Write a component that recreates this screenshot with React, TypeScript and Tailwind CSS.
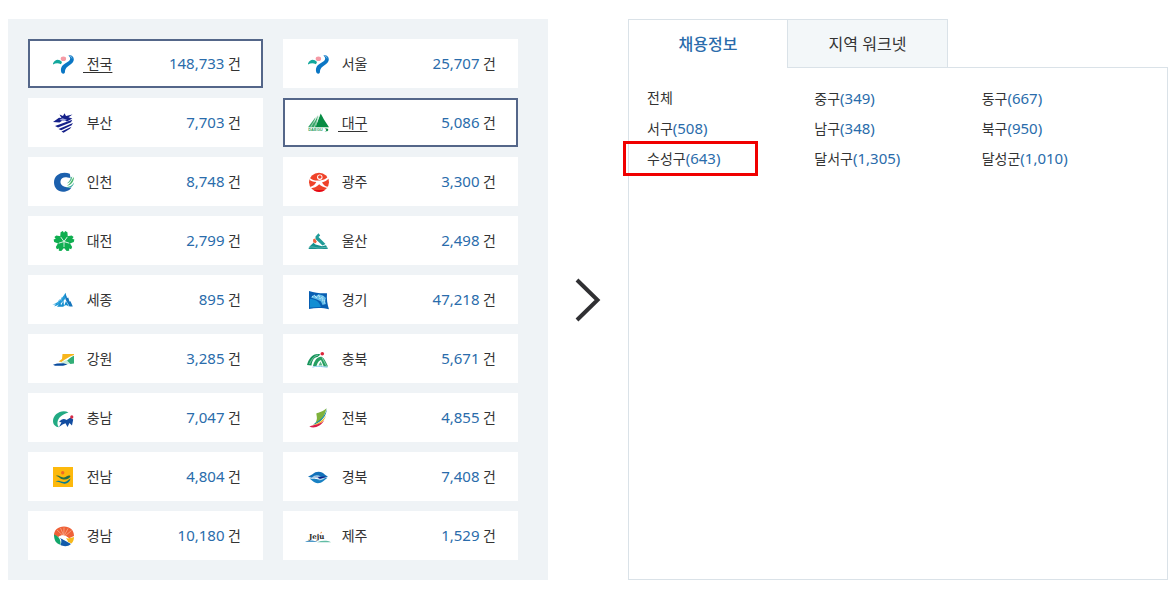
import type { ReactNode } from "react";

type Region = { name: string; count: string; selected?: boolean; icon: ReactNode };

const seoul = (
  <>
    <path d="M3 12.500C5 8.500 8.500 7.500 12 11L11 13.200C8 11.600 5.500 12 3 13.500Z" fill="#12a79c" />
    <ellipse cx="13.400" cy="7.700" rx="2.700" ry="2.300" fill="#f59aa5" />
    <path d="M18.500 4.500C21 3.500 24 5.500 23.800 8.500C23.500 12 20.500 13.500 17.800 15.500C15.500 17.300 14.900 19 14.900 21.500C14 23.300 11.800 23 11.200 21C10.200 16.500 12.500 14 15.500 12.300C18.500 10.500 20.300 9.500 20.200 7.500C20 6 19.200 5.500 18.500 4.500Z" fill="#0a76c4" />
    <path d="M18.500 4.500C20.500 4 22.500 5.500 22.400 8C21.500 6.500 20 5.500 18.500 4.500Z" fill="#7db9e2" />
  </>
);

const busan = (
  <>
    <path d="M3 12L9 7.800L11.500 8L9.500 4.500L13 6L14.500 3.300L16 6L22.500 4.500L18.500 7.300L22.300 8.500L17 11.500L13.500 9.800L9.500 12.500Z" fill="#15208a" />
    <path d="M9.500 9.800L12.500 8.300L17 9.700L13.500 11.300Z" fill="#9fa6dc" />
    <path d="M5 16L22.300 9.800L21 12.300L8 17.600Z" fill="#15208a" />
    <path d="M8.500 18.900L23 13L21.600 15.300L11.200 20.200Z" fill="#15208a" />
    <path d="M11.500 21.400L21.500 16.700L20 18.700L13.500 22.800Z" fill="#15208a" />
  </>
);

const daegu = (
  <>
    <path d="M10.500 17.300L15.700 3.600L17.500 6.800L18.800 9.200L24 17.300Z" fill="#078c44" />
    <path d="M3 17.300L10.500 7.200L7.800 17.300ZM6.800 17.300L13 5.200L11 17.300Z" fill="#36a568" />
    <path d="M5.800 17L12 6.400M9.300 17L14.300 5.300" stroke="#c5e5d2" strokeWidth=".7" />
    <path d="M19.500 18.700C22 18 23.500 18.800 23.300 20C23 21.300 21 21.500 19.500 21.400C21.500 20.900 22.300 19.500 19.500 18.700Z" fill="#078c44" />
    <text x="3.200" y="21.400" fontSize="4" fontWeight="700" fill="#2d9e62" className="font-['Liberation_Sans',sans-serif]">DAEGU</text>
  </>
);

const incheon = (
  <>
    <path d="M19.800 4.800C13 1.800 4 5 4 13.300C4 20 9.500 24 15.500 22.500C18.500 21.700 20.500 20.500 21.500 18.500C19.500 18.800 17.500 18.600 16 18C12.300 17.500 10.300 15.500 10.500 12.300C10.800 8.800 14.500 7.500 17.500 8.500L20.500 9Z" fill="#1c60ad" />
    <path d="M24 8C21.500 10.500 21.500 14 16.800 16.700C20.500 16.700 23.800 13 24 8Z" fill="#45b66a" />
    <path d="M24 13.500C22.500 16.500 19.500 18 16 18.200C19.500 19.800 23.500 17.500 24 13.500Z" fill="#2fa899" />
    <path d="M20.800 8.500C20.300 11 18.800 13 16.800 14.500C19.800 13.800 22 11.500 22.300 7.500Z" fill="#54b98e" />
  </>
);

const petal = "M14 13.200L10.200 8.600L10.600 4.300L12.800 3L14 4.800L15.200 3L17.400 4.300L17.800 8.600Z";
const daejeon = (
  <>
    <g fill="#0fae50">
      <path d={petal} />
      <path d={petal} transform="rotate(72 14 13.500)" />
      <path d={petal} transform="rotate(144 14 13.500)" />
      <path d={petal} transform="rotate(216 14 13.500)" />
      <path d={petal} transform="rotate(288 14 13.500)" />
    </g>
    <g stroke="#d4f1df" strokeWidth=".9">
      <path d="M14 13.500V8" transform="rotate(36 14 13.500)" />
      <path d="M14 13.500V8" transform="rotate(108 14 13.500)" />
      <path d="M14 13.500V8" transform="rotate(180 14 13.500)" />
      <path d="M14 13.500V8" transform="rotate(252 14 13.500)" />
      <path d="M14 13.500V8" transform="rotate(324 14 13.500)" />
    </g>
  </>
);

const sejong = (
  <>
    <path d="M2.300 17.500C7 16.500 12 12 15.500 5.700L16.500 10C13 15 9 18.700 4 19.300L6 17.500Z" fill="#239bd8" />
    <path d="M15.200 6L17 11L18.200 10.500L19.500 14.500L20.500 14.300L22.800 19.500H19.500L15.500 12.500Z" fill="#1676bd" />
    <path d="M7 19.700L10.500 15.500L11 18.500L13.500 13.500L14 19L16 14L19 19.500L16 18L13 19.700Z" fill="#168fcf" />
    <path d="M7.500 16.500L9.500 12.500M11 14L12.200 10" stroke="#58b8e5" strokeWidth=".9" />
  </>
);

const gwangju = (
  <>
    <ellipse cx="14" cy="13.200" rx="10" ry="9.500" fill="#ef4329" />
    <circle cx="14.800" cy="8.300" r="2.700" fill="#fff" />
    <circle cx="14.800" cy="8" r="1.800" fill="#ef4329" />
    <path d="M4.300 8.500C7.500 11.800 11.500 11.800 14.500 11.500C18.500 11.300 21.500 9.500 23 7.800L24 9.300C22 11.800 19.500 12.800 17 13.400C18.500 16.300 21 17.500 23 17.800L22 19C18.500 18.500 16 16.800 14.200 15.300C11.500 18.200 8.800 19 6.300 19.200L5.200 18C8.500 17.300 10.300 15 11.300 13.100C8 13.100 5.800 12 4.200 10.300Z" fill="#fff" />
    <path d="M8.500 21H20C17 23.500 11.500 23.500 8.500 21Z" fill="#e60914" />
  </>
);

const ulsan = (
  <>
    <path d="M10.500 8.500L13.500 5.300L15.200 7.400L13.500 9L20.500 16L17.500 17.500L10.500 11Z" fill="#209b98" />
    <path d="M8 11.500L10 10.500L11.500 13.300L11 15.300L8.300 14.500Z" fill="#ed6541" />
    <path d="M4.500 18.500L8.500 14.800L10.500 16.500L17 18.300L21 17.300L23 21H3.500Z" fill="#14918e" />
    <path d="M3.500 19.700C8 17.700 11 20.500 14.500 20C18 20.300 19.500 18.500 23 20" stroke="#8acbc5" strokeWidth=".6" fill="none" />
  </>
);

const gyeonggi = (
  <>
    <path d="M4 4C10 6 17 6.600 22 6.200C21.500 12 22.300 17 24 22.300C18 20.700 11 20.500 4 22Z" fill="#075eb2" />
    <path d="M5 12C10 12 14 14 16 20L5 20.500Z" fill="#118ed3" />
    <path d="M6 10.500L8 8.300L11 9L13.500 7.200L18 8.500L21 11L20 14L21 17L17.500 18L16 14.500L12 12.500Z" fill="#62bde8" />
    <path d="M7 10L10 8L11 11L14 8L15 12L18 9.500L17.500 14L20 13L19 17" fill="none" stroke="#c7eafa" strokeWidth=".9" strokeDasharray="1.500 .8" />
  </>
);

const gangwon = (
  <>
    <path d="M12.500 8H24V9C19 10.500 16 13 11.500 16L8.500 15.500L12 13Z" fill="#f7b51c" />
    <path d="M24 9.800V17.500L20.500 18L16.500 15.300C19 13 21 11 24 9.800Z" fill="#32ae77" />
    <path d="M10.500 16.800L16.500 14L20 17.500L17 18.200Z" fill="#caecd9" />
    <path d="M3 18.700L7 17.600L13.500 17.200L17.500 18.600L13 19.800H5Z" fill="#094b9c" />
  </>
);

const chungnam = (
  <>
    <path d="M18.500 7.500C12 3.800 3 9 3 16C3 19.500 5.500 22 9 22.300C6.500 19.500 7.200 15 10 12C12.500 9.500 15.500 8.500 18.500 7.500Z" fill="#22aa83" />
    <path d="M9 17C11.500 14 14 13.200 16.500 15L20.500 12.500L23.200 14.500L22 20.500L19.500 18L17.500 22L15.500 18.200L12.500 19.500L9 22L11.500 17.200Z" fill="#124ca0" />
    <ellipse cx="21.800" cy="12" rx="1.600" ry="1.700" fill="#d62945" />
  </>
);

const jeonnam = (
  <>
    <path d="M3 3H23V23H3Z" fill="#fdb90c" />
    <circle cx="12.700" cy="8.700" r="1.700" fill="#ef6a24" />
    <path d="M6 12C9 10.500 10.500 14 14 13.400C17 13 18 10.500 20.500 12C19.800 14.500 17 15.800 13.500 15.400C10.300 15.200 9.500 12.800 6 12Z" fill="#246e48" />
    <path d="M5.500 17.500C9.500 15.500 11.500 18.500 14.500 18C17.500 17.600 18 15.500 20.500 14.500C19.800 18.500 16.500 20.300 13.500 19.500C10.500 18.800 9 17.800 5.500 17.500Z" fill="#087b91" />
  </>
);

const gyeongnam = (
  <>
    <path d="M4 13C3.800 7 8 3.500 14 3.500C20 3.500 24 7 24 13L18.500 15.500C15 11.500 12 11.500 9 14Z" fill="#ef6137" />
    <path d="M13.500 13L7 7M13.500 12L10.500 5M13.800 12L14 4.500M14.500 12L18 5.500M15 13L21.500 7.500" stroke="#fac0a5" strokeWidth=".6" />
    <path d="M4 11.500C8.500 13 11 16.500 10.500 21.700C6 21 4 17 4 11.500Z" fill="#12a66b" />
    <path d="M9.500 14.500L18.300 19.500L21 21C18 24 13 23.500 10.500 22C12 18.500 11.500 16 9.500 14.500Z" fill="#125baa" />
    <path d="M14.800 14C18 15.500 21 15 24 14C24 16.800 23 19 21.500 20.500L18 18.700Z" fill="#f6b91c" />
    <path d="M8.500 13.500C11.500 11.500 16 12.300 19.500 15.500L16 15.200L18 18.300L12 15.800Z" fill="#fff" />
  </>
);

const chungbuk = (
  <>
    <path d="M2 19C4 11.500 9 6.500 15.500 8.500L12.500 11C9 11 7 15 6.500 19.500Z" fill="#16945b" />
    <path d="M8 20C9.500 14 13 10 17 11C19.800 12.500 20.800 16 23 20.500H18.800L16 14C13 15 12.500 17.500 11.500 20Z" fill="#269f61" />
    <path d="M4.500 18C7 12.500 9.500 10 13 9M17 11.500L21.500 20" fill="none" stroke="#c1e8d3" strokeWidth=".6" />
    <path d="M13.500 19.500L15.500 15.500L17.500 19.500Z" fill="#5bb98a" />
    <circle cx="17.300" cy="7.700" r="1.800" fill="#dd263b" />
    <path d="M7.500 21.200C12 19.500 15 20.500 22.500 21.200" fill="none" stroke="#83c8e8" strokeWidth="1" />
  </>
);

const jeonbuk = (
  <>
    <path d="M21.500 3.300C17.500 7 14 7.500 11.300 8.500C11.700 12 13 14 10 18.500C17 15.500 19.500 11 21.500 3.300Z" fill="#7fb23c" />
    <path d="M22 3.300C20.500 9.500 17 14.500 9.500 18.500L8 20C17 17 21.500 11 22 3.300Z" fill="#158a9d" />
    <path d="M21.200 10C18.500 15.500 14 18 7.500 20.300C14.500 20 19.500 16.500 21.200 10Z" fill="#f3b61c" />
    <path d="M19.300 15C15.500 19.500 10 19.500 4.300 21.500C9 24 16 21.500 19.300 15Z" fill="#d81d49" />
  </>
);

const gyeongbuk = (
  <>
    <path d="M3 12.800L7.500 10.300C11 6.800 17 7 20 10.800L23 12.800L18.500 13.500C15.500 12 12 12.500 9.500 14.500Z" fill="#1271b9" />
    <path d="M4.500 14.500L12 15C14 15 16 13.500 19 13.300L22.500 13.800L18.500 17C14.500 20.200 10.500 19.800 7.300 16.800Z" fill="#1981c3" />
    <path d="M6.500 13.800C10 10.500 12.500 10.800 15.500 12.200C13 12.300 11 13.300 10 14.700ZM11.500 15.500C14.500 16 17 13 21.500 13.300C18.500 15 15.500 17.500 11.500 15.500Z" fill="#fff" opacity=".65" />
    <path d="M9.500 12L12.500 13.300L19 12.400L21.500 13L15 14.700Z" fill="#101d86" />
  </>
);

const jeju = (
  <>
    <path d="M0 19C4 16.800 9 17.500 12.500 19Z" fill="#4f99c9" />
    <path d="M12 19.200C17 17.500 22 17.300 26 19.200Z" fill="#62bca5" />
    <text x="4" y="16" fontSize="7" fontWeight="700" fill="#252525" className="font-['DejaVu_Serif',serif]">Jeju</text>
    <path d="M15 10.500L16.300 8.500L17.200 10Z" fill="#ee8b3a" />
  </>
);

const regions: Region[] = [
  { name: "전국", count: "148,733", selected: true, icon: seoul },
  { name: "서울", count: "25,707", icon: seoul },
  { name: "부산", count: "7,703", icon: busan },
  { name: "대구", count: "5,086", selected: true, icon: daegu },
  { name: "인천", count: "8,748", icon: incheon },
  { name: "광주", count: "3,300", icon: gwangju },
  { name: "대전", count: "2,799", icon: daejeon },
  { name: "울산", count: "2,498", icon: ulsan },
  { name: "세종", count: "895", icon: sejong },
  { name: "경기", count: "47,218", icon: gyeonggi },
  { name: "강원", count: "3,285", icon: gangwon },
  { name: "충북", count: "5,671", icon: chungbuk },
  { name: "충남", count: "7,047", icon: chungnam },
  { name: "전북", count: "4,855", icon: jeonbuk },
  { name: "전남", count: "4,804", icon: jeonnam },
  { name: "경북", count: "7,408", icon: gyeongbuk },
  { name: "경남", count: "10,180", icon: gyeongnam },
  { name: "제주", count: "1,529", icon: jeju },
];

const districts: { name: string; count?: string; marked?: boolean }[] = [
  { name: "전체" },
  { name: "중구", count: "349" },
  { name: "동구", count: "667" },
  { name: "서구", count: "508" },
  { name: "남구", count: "348" },
  { name: "북구", count: "950" },
  { name: "수성구", count: "643", marked: true },
  { name: "달서구", count: "1,305" },
  { name: "달성군", count: "1,010" },
];

function RegionCard({ name, count, selected, icon }: Region) {
  return (
    <button
      type="button"
      aria-pressed={!!selected}
      className={`flex h-[49px] w-full items-center border-2 bg-white px-5 text-sm ${selected ? "border-[#546689]" : "border-white"}`}
    >
      <svg viewBox="0 0 28 25" className="h-[25px] w-7 shrink-0 overflow-visible" aria-hidden="true">
        {icon}
      </svg>
      <span className={`ml-[5px] whitespace-pre ${selected ? "underline underline-offset-3" : ""}`}>{` ${name}`}</span>
      <span className="ml-auto">
        <span className="text-[15px] text-[#2a6cab]">{count}</span> 건
      </span>
    </button>
  );
}

export default function App() {
  return (
    <main className="grid grid-cols-[minmax(0,1fr)_80px_minmax(0,1fr)] bg-white px-2 pt-[19px] pb-6 font-['Noto_Sans','Noto_Sans_CJK_KR',sans-serif] text-[#333]">
      <section className="bg-[#eff3f6] py-5 pr-[30px] pl-5">
        <div className="grid grid-cols-2 gap-x-5 gap-y-2.5">
          {regions.map((region) => (
            <RegionCard key={region.name} {...region} />
          ))}
        </div>
      </section>

      <div className="flex items-center justify-center">
        <svg viewBox="0 0 26 44" className="h-11 w-[26px]" fill="none" stroke="#303033" strokeWidth="4" aria-hidden="true">
          <path d="M2 2L22.500 22L2 42" />
        </svg>
      </div>

      <section className="flex flex-col">
        <div role="tablist" className="flex h-[49px] text-base">
          <button
            type="button"
            role="tab"
            aria-selected="true"
            className="w-[159px] border-t border-l border-[#dae2e8] font-medium text-[#2a6cab]"
          >
            채용정보
          </button>
          <button type="button" role="tab" aria-selected="false" className="w-[161px] border border-[#dae2e8] bg-[#f3f7f9]">
            지역 워크넷
          </button>
          <div className="flex-1 border-b border-[#dae2e8]" />
        </div>
        <div role="tabpanel" className="flex-1 border-x border-b border-[#dae2e8] px-[18px] pt-[15px]">
          <ul className="grid grid-cols-3 text-sm">
            {districts.map(({ name, count, marked }) => (
              <li key={name} className="relative h-[30px] leading-[30px]">
                <a href="#">
                  {name}
                  {count && <span className="text-[15px] text-[#2a6cab]">({count})</span>}
                </a>
                {marked && (
                  <span className="pointer-events-none absolute -top-0.5 -left-6 h-[35px] w-[135px] border-3 border-[#f00000]" />
                )}
              </li>
            ))}
          </ul>
        </div>
      </section>
    </main>
  );
}
